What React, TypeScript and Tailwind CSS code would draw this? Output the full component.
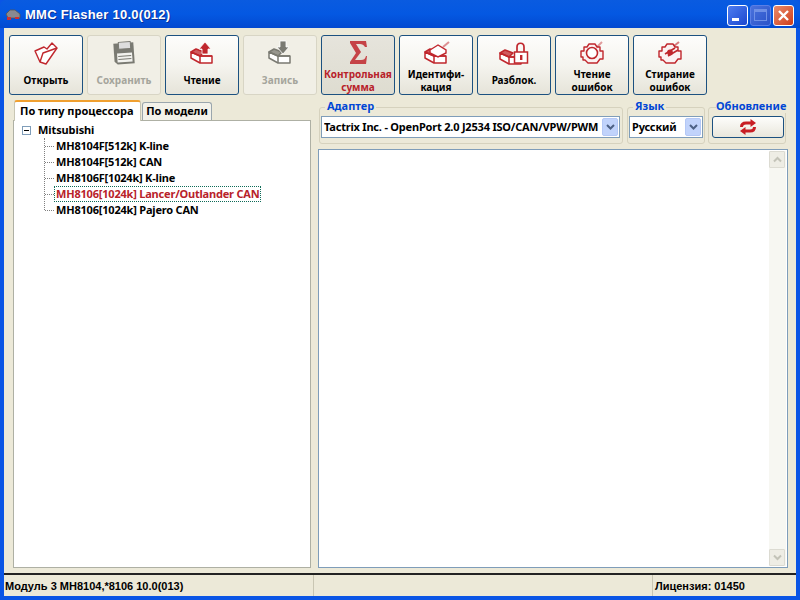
import React from "react";

const R = "#c0272d";
const G = "#7a7a72";

function Box({ c, ox = 0, oy = 0 }: { c: string; ox?: number; oy?: number }) {
  return (
    <g transform={`translate(${ox} ${oy})`} fill="none" stroke={c} strokeWidth="1.5" strokeLinejoin="round">
      <path d="M10 15 L1 11 L1 17 L10 22 L22 22 L22 15 Z" fill="#fff" />
      <path d="M10 15 L22 15 M10 15 L10 22" />
      <path d="M1 11 L6 8 L14 11 L10 15 Z" fill={c} fillOpacity=".75" />
    </g>
  );
}

function Icon({ name, c }: { name: string; c: string }) {
  const s = { width: 32, height: 26 };
  if (name === "open")
    return (
      <svg {...s} viewBox="0 0 32 26" fill="none" stroke={c} strokeWidth="1.4" strokeLinejoin="round">
        <path d="M5 11 L14 7 L17 9 L22 3 L27 8 L16 24 L10 22 Z" fill="#fff" />
        <path d="M10 22 L13 13 L27 8" />
      </svg>
    );
  if (name === "save")
    return (
      <svg {...s} viewBox="0 0 32 26" strokeLinejoin="round">
        <g transform="rotate(-4 16 13)">
          <path d="M6 3 L26 3 L26 24 L9 24 L6 21 Z" fill={c} />
          <rect x="11" y="2" width="12" height="7" fill="#ddd" stroke={c} />
          <rect x="9" y="13" width="15" height="9" fill="#f2f2ee" />
          <path d="M10 16 H23 M10 19 H23" stroke={c} />
        </g>
      </svg>
    );
  if (name === "read" || name === "write")
    return (
      <svg {...s} viewBox="0 0 32 26">
        <g transform="translate(4 1)">
          <Box c={c} />
          <path d={name === "read" ? "M15 1 L21 8 L18 8 L18 13 L12 13 L12 8 L9 8 Z" : "M12 0 L18 0 L18 6 L21 6 L15 13 L9 6 L12 6 Z"} fill={c} stroke="#fff" strokeWidth=".8" />
        </g>
      </svg>
    );
  if (name === "sum")
    return (
      <svg {...s} viewBox="0 0 32 26" fill={c} fillOpacity=".85">
        <path d="M8 1 H24 L25 7 L23 7 C22 5 20 4 18 4 H14 L19 12 L13 20 H19 C22 20 23 19 24 16 L25 16 L24 24 H8 L8 22 L14 13 L8 3 Z" />
      </svg>
    );
  if (name === "id")
    return (
      <svg {...s} viewBox="0 0 32 26">
        <g transform="translate(4 1)">
          <Box c={c} />
          <path d="M6 9 L14 4 L22 9 L22 12 L14 16 L6 12 Z" fill="#fff" stroke={c} strokeWidth="1.4" />
          <path d="M19 6 L25 1" stroke={c} strokeOpacity=".5" strokeWidth="2" />
        </g>
      </svg>
    );
  if (name === "unlock")
    return (
      <svg {...s} viewBox="0 0 32 26">
        <g transform="translate(1 1)">
          <Box c={c} oy={1} />
          <path d="M18 11 V6 C18 1 25 1 25 6 V11" fill="none" stroke={c} strokeWidth="1.7" />
          <rect x="15.5" y="11" width="13" height="11" fill="#fff" stroke={c} strokeWidth="1.5" />
          <rect x="21" y="14" width="2.4" height="5" fill={c} />
        </g>
      </svg>
    );
  return (
    <svg {...s} viewBox="0 0 32 26" fill="none" stroke={c} strokeWidth="1.4" strokeLinejoin="round">
      <path d="M8 7 H11 L13 4 H19 L21 7 H24 V11 H27 V19 H24 L21 23 H12 L9 20 H7 V17 H5 V11 H8 Z" fill="#fbf2f2" />
      {name === "errRead" ? (
        <>
          <circle cx="16" cy="13" r="5.500" fill="#fff" strokeWidth="1.6" />
          <path d="M21 7 L26 2" strokeOpacity=".45" strokeWidth="2" />
        </>
      ) : (
        <>
          <path d="M11 14 L21 8 M14 16 L24 10" strokeWidth="1.6" />
          <circle cx="16" cy="12.500" r="2.200" fill={c} />
          <path d="M20 6 L25 2" strokeOpacity=".6" strokeWidth="2" />
        </>
      )}
    </svg>
  );
}

function ToolButton({ icon, label, disabled, active }: { icon: string; label: string[]; disabled?: boolean; active?: boolean }) {
  const tc = disabled ? "text-[#a5a59c]" : active ? "text-[#b8222a]" : "text-black";
  return (
    <div
      className={`w-[74px] h-[60px] shrink-0 rounded-[3px] border flex flex-col items-center ${
        disabled
          ? "border-[#d8d5c5] bg-[#f1efe6]"
          : active
            ? "border-[#1c5180] bg-gradient-to-b from-[#e6e4dc] to-[#dedcd0]"
            : "border-[#1c5180] bg-gradient-to-b from-[#fdfdfb] via-[#f5f4ef] to-[#e6e4d9]"
      }`}
    >
      <div className="h-[31px] pt-[4px] flex justify-center">
        <Icon name={icon} c={disabled ? G : R} />
      </div>
      <div className={`flex-1 flex flex-col justify-center text-[10px] leading-[13px] font-bold text-center whitespace-nowrap ${tc}`}>
        {label.map((l) => (
          <div key={l}>{l}</div>
        ))}
      </div>
    </div>
  );
}

function Group({ title, className, children }: { title: string; className: string; children: React.ReactNode }) {
  return (
    <div className={`relative h-[37px] mt-[7px] rounded-[3px] border border-[#d6d2be] ${className}`}>
      <span className="absolute left-[5px] top-[-9px] bg-[#ece9d8] px-[2px] text-[11px] leading-[14px] font-bold text-[#0046d5]">{title}</span>
      {children}
    </div>
  );
}

function Combo({ text, className }: { text: string; className: string }) {
  return (
    <div className={`h-[22px] bg-white border border-[#7f9db9] flex items-center pl-[2px] pr-[1px] ${className}`}>
      <span className="flex-1 text-[11px] tracking-[-0.2px] font-bold text-black whitespace-nowrap overflow-hidden">{text}</span>
      <span className="w-[16px] h-[18px] rounded-[2px] bg-[#c1d3fb] border border-[#b4c8f6] flex items-center justify-center shrink-0">
        <svg width="9" height="7" viewBox="0 0 9 7" fill="none" stroke="#4d6185" strokeWidth="2">
          <path d="M1 1 L4.500 4.500 L8 1" />
        </svg>
      </span>
    </div>
  );
}

function Leaf({ text, selected }: { text: string; selected?: boolean }) {
  return (
    <div className="h-[16px] flex items-center relative">
      <div className="w-[9px] border-t border-dotted border-[#808080]" />
      <span
        className={`text-[11px] leading-[14px] tracking-[-0.2px] font-bold whitespace-nowrap px-[1px] ${
          selected ? "text-[#b8222a] border border-dotted border-[#0f6b58] bg-white" : "text-black border border-transparent"
        }`}
      >
        {text}
      </span>
    </div>
  );
}

function TitleButton({ children, bg, dim }: { children: React.ReactNode; bg: string; dim?: boolean }) {
  return (
    <div className={`w-[21px] h-[21px] rounded-[3px] border flex items-center justify-center ${dim ? "border-[#5b7fe6]" : "border-white"} ${bg}`}>
      {children}
    </div>
  );
}

function ScrollBtn({ up }: { up?: boolean }) {
  return (
    <div className="w-[16px] h-[17px] bg-[#eeede5] border border-[#dcdbd2] rounded-[1px] flex items-center justify-center">
      <svg width="9" height="7" viewBox="0 0 9 7" fill="none" stroke="#c3c3b8" strokeWidth="2">
        <path d={up ? "M1 5.500 L4.500 2 L8 5.500" : "M1 1.500 L4.500 5 L8 1.500"} />
      </svg>
    </div>
  );
}

export default function App() {
  return (
    <div className="w-[800px] h-[600px] flex flex-col overflow-hidden bg-[#0a55e5]" style={{ fontFamily: '"Noto Sans", "Liberation Sans", sans-serif' }}>
      {/* Title bar */}
      <div className="h-[28px] shrink-0 flex items-center pt-[2px] pl-[5px] pr-[5px] bg-gradient-to-b from-[#0a5be0] via-[#0458e2] to-[#0349d0] rounded-t-[6px]">
        <svg width="16" height="12" viewBox="0 0 16 12" className="mr-[4px]">
          <path d="M1 5 L5 1 H10 L15 5 V9 H3 Z" fill="#8a8a90" stroke="#555" strokeWidth=".8" />
          <rect x="2" y="8" width="4" height="3" fill="#d03030" />
          <rect x="10" y="8" width="4" height="2" fill="#d03030" />
        </svg>
        <span className="flex-1 text-white text-[13px] font-bold tracking-[0.25px] [text-shadow:1px_1px_0_#0b2f95]" style={{ fontFamily: '"Liberation Sans", sans-serif' }}>
          MMC Flasher 10.0(012)
        </span>
        <div className="flex gap-[2px] mr-[1px]">
          <TitleButton bg="bg-gradient-to-br from-[#4f7df0] to-[#1c46cf]">
            <div className="w-[7px] h-[3px] bg-white mt-[9px] mr-[5px]" />
          </TitleButton>
          <TitleButton dim bg="bg-gradient-to-br from-[#4a72dd] to-[#2a52c8]">
            <div className="w-[13px] h-[12px] border border-[#6f90e6] border-t-[3px]" />
          </TitleButton>
          <TitleButton bg="bg-gradient-to-br from-[#e98a6a] to-[#cf3a12]">
            <svg width="13" height="13" viewBox="0 0 13 13" stroke="#fff" strokeWidth="2.400">
              <path d="M2 2 L11 11 M11 2 L2 11" />
            </svg>
          </TitleButton>
        </div>
      </div>

      {/* Client */}
      <div className="flex-1 flex flex-col mx-[4px] bg-[#ece9d8] min-h-0">
        <div className="flex gap-[4px] pl-[5px] pt-[7px] shrink-0">
          <ToolButton icon="open" label={["Открыть"]} />
          <ToolButton icon="save" label={["Сохранить"]} disabled />
          <ToolButton icon="read" label={["Чтение"]} />
          <ToolButton icon="write" label={["Запись"]} disabled />
          <ToolButton icon="sum" label={["Контрольная", "сумма"]} active />
          <ToolButton icon="id" label={["Идентифи-", "кация"]} />
          <ToolButton icon="unlock" label={["Разблок."]} />
          <ToolButton icon="errRead" label={["Чтение", "ошибок"]} />
          <ToolButton icon="errClear" label={["Стирание", "ошибок"]} />
        </div>

        <div className="flex-1 flex min-h-0 pt-[5px] pl-[9px] pr-[8px] pb-[5px] gap-[7px]">
          {/* Left */}
          <div className="w-[298px] shrink-0 flex flex-col">
            <div className="h-[20px] flex items-end shrink-0 relative z-10 pl-[1px]">
              <div className="w-[127px] h-[21px] bg-white border-x border-[#c8c6b4] border-t-[2px] border-t-[#f0a030] rounded-t-[3px] text-[11px] font-bold text-black pl-[5px] leading-[17px] whitespace-nowrap mb-[-1px]">
                По типу процессора
              </div>
              <div className="w-[70px] h-[18px] ml-[1px] bg-[#f3f2ea] border-x border-t border-[#9aa6ad] rounded-t-[3px] text-[11px] font-bold text-black text-center leading-[16px] whitespace-nowrap">
                По модели
              </div>
            </div>
            <div className="flex-1 bg-white border border-[#aeb0a4] pl-[8px] pt-[1px]">
              <div className="h-[16px] flex items-center">
                <div className="w-[9px] h-[9px] border border-[#7f9db9] flex items-center justify-center mr-[7px] mt-[1px]">
                  <div className="w-[5px] h-[1px] bg-black" />
                </div>
                <span className="text-[11px] tracking-[-0.1px] font-bold text-black">Mitsubishi</span>
              </div>
              <div className="ml-[22px] border-l border-dotted border-[#808080] h-[72px] flex flex-col overflow-visible">
                <Leaf text="MH8104F[512k] K-line" />
                <Leaf text="MH8104F[512k] CAN" />
                <Leaf text="MH8106F[1024k] K-line" />
                <Leaf text="MH8106[1024k] Lancer/Outlander CAN" selected />
                <Leaf text="MH8106[1024k] Pajero CAN" />
              </div>
            </div>
          </div>

          {/* Right */}
          <div className="flex-1 flex flex-col min-w-0">
            <div className="flex h-[49px] shrink-0 pl-[1px]">
              <Group title="Адаптер" className="w-[304px] pl-[1px] pt-[8px]">
                <Combo text="Tactrix Inc. - OpenPort 2.0 J2534 ISO/CAN/VPW/PWM" className="w-[299px]" />
              </Group>
              <Group title="Язык" className="w-[78px] ml-[4px] pl-[1px] pt-[8px]">
                <Combo text="Русский" className="w-[74px]" />
              </Group>
              <div className="relative w-[78px] h-[37px] mt-[7px] ml-[3px] rounded-[3px] border border-[#d6d2be] pl-[3px] pt-[8px]">
                <span className="absolute left-[7px] top-[-9px] bg-[#ece9d8] text-[11px] leading-[14px] font-bold text-[#0046d5] whitespace-nowrap">Обновление</span>
                <div className="w-[72px] h-[22px] rounded-[3px] border border-[#1c5180] bg-gradient-to-b from-[#fdfdfb] to-[#e9e7dc] flex items-center justify-center">
                  <svg width="18" height="16" viewBox="0 0 18 16" fill="none" stroke="#c81e24" strokeWidth="3">
                    <path d="M2.500 8 C2.500 5 4.500 4 7 4 H13" />
                    <path d="M15.500 8 C15.500 11 13.500 12 11 12 H5" />
                    <path d="M11.500 0 L17 4 L11.500 8 Z M6.500 8 L1 12 L6.500 16 Z" fill="#c81e24" stroke="none" />
                  </svg>
                </div>
              </div>
            </div>
            <div className="flex-1 bg-white border border-[#7f9db9] flex justify-end pr-[1px] pt-[1px] pb-[1px] min-h-0">
              <div className="w-[17px] bg-[#f7f7f2] flex flex-col justify-between">
                <ScrollBtn up />
                <ScrollBtn />
              </div>
            </div>
          </div>
        </div>

        {/* Status */}
        <div className="h-[23px] shrink-0 border-t-2 border-t-[#222] bg-[#ece9d8] flex items-center text-[11px] font-bold text-black" style={{ fontFamily: '"Liberation Sans", sans-serif' }}>
          <div className="w-[310px] h-full pl-[1px] pt-[1px] flex items-center border-r border-[#c9c6b3]">Модуль 3 МН8104,*8106 10.0(013)</div>
          <div className="w-[339px] h-full border-r border-[#c9c6b3]" />
          <div className="flex-1 pl-[2px] pt-[1px]">Лицензия: 01450</div>
        </div>
      </div>
      <div className="h-[4px] shrink-0" />
    </div>
  );
}
